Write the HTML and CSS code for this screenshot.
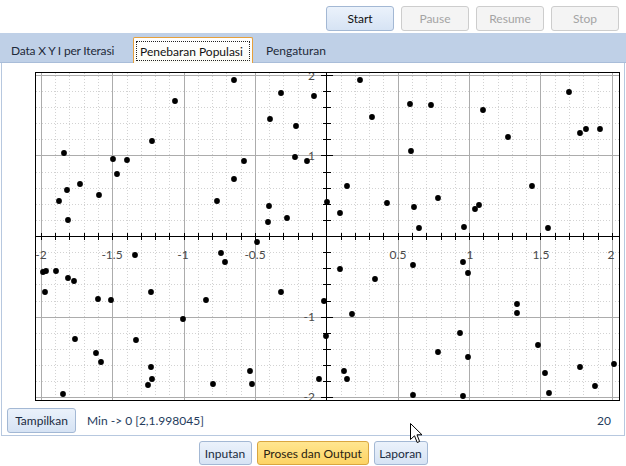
FILE: index.html
```html
<!DOCTYPE html>
<html>
<head>
<meta charset="utf-8">
<link rel="stylesheet" href="styles.css">
</head>
<body>
<div class="toolbar">
  <button class="btn w68">Start</button>
  <button class="btn w68 disabled">Pause</button>
  <button class="btn w68 disabled">Resume</button>
  <button class="btn w68 disabled">Stop</button>
</div>
<div class="tabs">
  <div class="tab tab-first">Data X Y I per Iterasi</div>
  <div class="tab tab-active"><span class="focus">Penebaran Populasi</span></div>
  <div class="tab tab-last">Pengaturan</div>
</div>
<div class="panel">
  <div class="chart">
    <svg width="589" height="342" viewBox="33 64 589 342">
      <rect x="35" y="72" width="585" height="329" fill="#fff"/>
      <path class="minor" d="M55.5 73V400M69.5 73V400M84.5 73V400M98.5 73V400M127.5 73V400M141.5 73V400M155.5 73V400M169.5 73V400M198.5 73V400M212.5 73V400M226.5 73V400M241.5 73V400M269.5 73V400M283.5 73V400M298.5 73V400M312.5 73V400M341.5 73V400M355.5 73V400M369.5 73V400M383.5 73V400M412.5 73V400M426.5 73V400M441.5 73V400M455.5 73V400M483.5 73V400M498.5 73V400M512.5 73V400M526.5 73V400M555.5 73V400M569.5 73V400M583.5 73V400M598.5 73V400"/>
      <path class="minor" d="M36 91.5H619M36 107.5H619M36 123.5H619M36 139.5H619M36 172.5H619M36 188.5H619M36 204.5H619M36 220.5H619M36 252.5H619M36 268.5H619M36 284.5H619M36 301.5H619M36 333.5H619M36 349.5H619M36 365.5H619M36 381.5H619"/>
      <path class="major" d="M41.5 73V400M112.5 73V400M184.5 73V400M255.5 73V400M398.5 73V400M469.5 73V400M540.5 73V400M612.5 73V400M36 75.5H619M36 155.5H619M36 317.5H619M36 397.5H619"/>
      <path class="axis" d="M36 236.5H619M326.5 73V400"/>
      <path class="axis" d="M41.5 233V240M55.5 233V240M69.5 233V240M84.5 233V240M98.5 233V240M112.5 233V240M127.5 233V240M141.5 233V240M155.5 233V240M169.5 233V240M184.5 233V240M198.5 233V240M212.5 233V240M226.5 233V240M241.5 233V240M255.5 233V240M269.5 233V240M283.5 233V240M298.5 233V240M312.5 233V240M341.5 233V240M355.5 233V240M369.5 233V240M383.5 233V240M398.5 233V240M412.5 233V240M426.5 233V240M441.5 233V240M455.5 233V240M469.5 233V240M483.5 233V240M498.5 233V240M512.5 233V240M526.5 233V240M540.5 233V240M555.5 233V240M569.5 233V240M583.5 233V240M598.5 233V240M612.5 233V240"/>
      <path class="axis" d="M321 75.5H333M323 91.5H331M323 107.5H331M323 123.5H331M323 139.5H331M321 155.5H333M323 172.5H331M323 188.5H331M323 204.5H331M323 220.5H331M323 252.5H331M323 268.5H331M323 284.5H331M323 301.5H331M321 317.5H333M323 333.5H331M323 349.5H331M323 365.5H331M323 381.5H331M321 397.5H333"/>
      <g class="xl">
        <text x="41" y="259">-2</text>
        <text x="112" y="259">-1.5</text>
        <text x="183" y="259">-1</text>
        <text x="255" y="259">-0.5</text>
        <text x="398" y="259">0.5</text>
        <text x="470" y="259">1</text>
        <text x="541" y="259">1.5</text>
        <text x="611" y="259">2</text>
      </g>
      <g class="yl">
        <text x="315" y="80">2</text>
        <text x="315" y="160">1</text>
        <text x="315" y="321">-1</text>
        <text x="315" y="401">-2</text>
      </g>
      <rect class="frame" x="35.5" y="72.5" width="584" height="328"/>
      <g class="dots">
        <circle cx="234" cy="80" r="2.9"/><circle cx="175" cy="101" r="2.9"/><circle cx="281" cy="93" r="2.9"/><circle cx="314" cy="96" r="2.9"/><circle cx="270" cy="119" r="2.9"/><circle cx="296" cy="126" r="2.9"/><circle cx="152" cy="141" r="2.9"/><circle cx="64" cy="153" r="2.9"/><circle cx="113" cy="159" r="2.9"/><circle cx="127" cy="160" r="2.9"/><circle cx="244" cy="161" r="2.9"/><circle cx="295" cy="157" r="2.9"/><circle cx="307" cy="161" r="2.9"/><circle cx="117" cy="174" r="2.9"/><circle cx="234" cy="179" r="2.9"/><circle cx="80" cy="184" r="2.9"/><circle cx="67" cy="190" r="2.9"/><circle cx="99" cy="195" r="2.9"/><circle cx="59" cy="201" r="2.9"/><circle cx="217" cy="201" r="2.9"/><circle cx="269" cy="206" r="2.9"/><circle cx="68" cy="220" r="2.9"/><circle cx="287" cy="218" r="2.9"/><circle cx="268" cy="222" r="2.9"/>
        <circle cx="360" cy="80" r="2.9"/><circle cx="569" cy="92" r="2.9"/><circle cx="580" cy="133" r="2.9"/><circle cx="586" cy="129" r="2.9"/><circle cx="600" cy="129" r="2.9"/><circle cx="410" cy="104" r="2.9"/><circle cx="431" cy="105" r="2.9"/><circle cx="483" cy="110" r="2.9"/><circle cx="372" cy="117" r="2.9"/><circle cx="508" cy="137" r="2.9"/><circle cx="411" cy="151" r="2.9"/><circle cx="347" cy="186" r="2.9"/><circle cx="532" cy="186" r="2.9"/><circle cx="438" cy="198" r="2.9"/><circle cx="387" cy="203" r="2.9"/><circle cx="327" cy="202" r="2.9"/><circle cx="414" cy="207" r="2.9"/><circle cx="479" cy="205" r="2.9"/><circle cx="475" cy="209" r="2.9"/><circle cx="340" cy="213" r="2.9"/><circle cx="419" cy="228" r="2.9"/><circle cx="464" cy="227" r="2.9"/><circle cx="548" cy="228" r="2.9"/>
        <circle cx="43" cy="272" r="2.9"/><circle cx="46" cy="271" r="2.9"/><circle cx="56" cy="271" r="2.9"/><circle cx="68" cy="278" r="2.9"/><circle cx="74" cy="281" r="2.9"/><circle cx="45" cy="292" r="2.9"/><circle cx="135" cy="255" r="2.9"/><circle cx="221" cy="253" r="2.9"/><circle cx="225" cy="262" r="2.9"/><circle cx="257" cy="242" r="2.9"/><circle cx="281" cy="292" r="2.9"/><circle cx="151" cy="292" r="2.9"/><circle cx="98" cy="299" r="2.9"/><circle cx="111" cy="300" r="2.9"/><circle cx="206" cy="300" r="2.9"/><circle cx="183" cy="319" r="2.9"/><circle cx="75" cy="339" r="2.9"/><circle cx="136" cy="340" r="2.9"/><circle cx="96" cy="353" r="2.9"/><circle cx="101" cy="362" r="2.9"/><circle cx="151" cy="367" r="2.9"/><circle cx="152" cy="379" r="2.9"/><circle cx="148" cy="385" r="2.9"/><circle cx="213" cy="384" r="2.9"/><circle cx="250" cy="371" r="2.9"/><circle cx="252" cy="384" r="2.9"/><circle cx="319" cy="379" r="2.9"/><circle cx="63" cy="394" r="2.9"/>
        <circle cx="340" cy="269" r="2.9"/><circle cx="375" cy="279" r="2.9"/><circle cx="413" cy="265" r="2.9"/><circle cx="463" cy="262" r="2.9"/><circle cx="468" cy="273" r="2.9"/><circle cx="324" cy="301" r="2.9"/><circle cx="352" cy="314" r="2.9"/><circle cx="517" cy="304" r="2.9"/><circle cx="517" cy="313" r="2.9"/><circle cx="326" cy="336" r="2.9"/><circle cx="460" cy="333" r="2.9"/><circle cx="438" cy="352" r="2.9"/><circle cx="468" cy="357" r="2.9"/><circle cx="538" cy="345" r="2.9"/><circle cx="344" cy="371" r="2.9"/><circle cx="347" cy="379" r="2.9"/><circle cx="545" cy="373" r="2.9"/><circle cx="580" cy="367" r="2.9"/><circle cx="614" cy="364" r="2.9"/><circle cx="413" cy="395" r="2.9"/><circle cx="463" cy="396" r="2.9"/><circle cx="549" cy="393" r="2.9"/><circle cx="595" cy="386" r="2.9"/>
      </g>
    </svg>
  </div>
  <div class="status">
    <button class="btn w69">Tampilkan</button>
    <span class="info">Min -&gt; 0 [2,1.998045]</span>
    <span class="count">20</span>
  </div>
</div>
<div class="nav">
  <button class="btn w53">Inputan</button>
  <button class="btn w112 current">Proses dan Output</button>
  <button class="btn w54">Laporan</button>
</div>
<svg class="cursor" width="13" height="21" viewBox="0 0 13 21"><path d="M0.5 0.5V16.5L4.5 12.8L7.2 19.5L9.6 18.5L7 11.8H12Z" fill="#fff" stroke="#000" stroke-linejoin="miter"/></svg>
</body>
</html>
```
FILE: styles.css
```css
html, body {
  margin: 0;
  padding: 0;
}
body {
  width: 626px;
  height: 466px;
  overflow: hidden;
  position: relative;
  background: #ffffff;
  font-family: Lato, "Noto Sans", sans-serif;
  font-size: 12px;
  color: #1b1b1b;
}
.toolbar {
  height: 33px;
  box-sizing: border-box;
  display: flex;
  justify-content: flex-end;
  align-items: flex-start;
  gap: 7px;
  padding: 6px 7px 0 0;
}
.btn {
  height: 25px;
  box-sizing: border-box;
  border: 1px solid #a3b8d4;
  border-radius: 3px;
  background: linear-gradient(#ebf2fb, #d6e3f4);
  color: #1a2a40;
  font-family: Lato, "Noto Sans", sans-serif;
  font-size: 12px;
  display: flex;
  align-items: center;
  justify-content: center;
  padding: 0;
  margin: 0;
}
.toolbar .btn { color: #111; }
.btn.disabled {
  background: #f4f4f4;
  border-color: #cdcdcd;
  color: #a4a4a4;
}
.w68 { width: 68px; }
.w69 { width: 69px; }
.w53 { width: 53px; }
.w54 { width: 54px; }
.w112 { width: 112px; }
.tabs {
  height: 30px;
  box-sizing: border-box;
  background: #bfd0e7;
  border-bottom: 1px solid #a9bdd9;
  display: flex;
  align-items: flex-end;
  padding-left: 4px;
}
.tab {
  height: 26px;
  box-sizing: border-box;
  margin-bottom: -1px;
  display: flex;
  align-items: center;
  color: #1e2a3a;
}
.tab-first {
  width: 129px;
  padding-left: 7px;
  letter-spacing: -0.2px;
}
.tab-active {
  width: 120px;
  border: 1px solid #e6a03c;
  border-bottom: 0;
  border-radius: 2px 2px 0 0;
  background: linear-gradient(#ffffff, #fcfcf6);
  padding: 3px 2px 2px 2px;
  align-items: stretch;
}
.focus {
  flex: 1;
  border: 1px dotted #222;
  padding-left: 3px;
  display: flex;
  align-items: center;
  color: #111;
}
.tab-last {
  padding-left: 13px;
}
.panel {
  margin: 0 1px;
  height: 373px;
  box-sizing: border-box;
  border: 1px solid #b7c8df;
  border-top: 0;
  display: flex;
  flex-direction: column;
}
.chart {
  margin: 1px 0 0 31px;
  height: 342px;
}
.chart svg { display: block; }
.minor {
  stroke: #d2d2d2;
  stroke-width: 1;
  stroke-dasharray: 1 2;
  fill: none;
}
.major {
  stroke: #acacac;
  stroke-width: 1;
  fill: none;
}
.axis {
  stroke: #000;
  stroke-width: 1;
  fill: none;
}
.frame {
  fill: none;
  stroke: #000;
  stroke-width: 1;
}
.xl text {
  font-family: Lato, "Noto Sans", sans-serif;
  font-size: 12px;
  fill: #4a4a4a;
  text-anchor: middle;
}
.yl text {
  font-family: Lato, "Noto Sans", sans-serif;
  font-size: 12px;
  fill: #4a4a4a;
  text-anchor: end;
}
.dots circle { fill: #000; }
.status {
  margin-top: 2px;
  height: 25px;
  display: flex;
  align-items: center;
  padding: 0 13px 0 5px;
}
.info {
  margin-left: 11px;
  color: #253b5c;
}
.count {
  margin-left: auto;
  color: #253b5c;
}
.nav {
  margin-top: 5px;
  display: flex;
  justify-content: center;
  gap: 5px;
}
.nav .btn { height: 24px; }
.btn.current {
  background: linear-gradient(#ffe690, #fdd364);
  border-color: #d9a640;
  color: #2a2210;
}
.cursor {
  position: absolute;
  left: 410px;
  top: 423px;
}
```
